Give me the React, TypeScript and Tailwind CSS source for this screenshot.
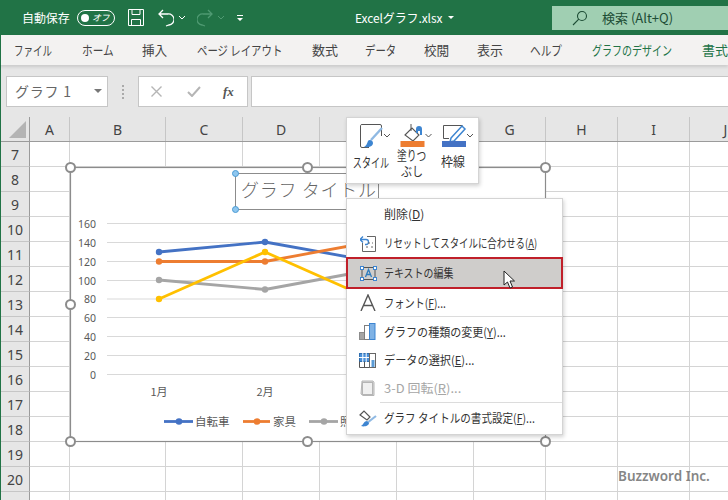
import React from "react";

const JP = "font-['Noto_Sans_CJK_JP','Noto_Sans',sans-serif]";
const COLS = [
  { l: "A", w: "w-[40px]" },
  { l: "B", w: "w-[96px]" },
  { l: "C", w: "w-[77px]" },
  { l: "D", w: "w-[77px]" },
  { l: "E", w: "w-[77px]" },
  { l: "F", w: "w-[77px]" },
  { l: "G", w: "w-[72px]" },
  { l: "H", w: "w-[72px]" },
  { l: "I", w: "w-[72px]" },
  { l: "J", w: "w-[72px]" },
];
const ROWS = [7, 8, 9, 10, 11, 12, 13, 14, 15, 16, 17, 18, 19, 20, 21];

const TABS = [
  { t: "ファイル", box: "ml-[13px] w-[38px]", sx: "scale-x-[.73]", c: "" },
  { t: "ホーム", box: "ml-[30px] w-[32px]", sx: "scale-x-[.82]", c: "" },
  { t: "挿入", box: "ml-[28px] w-[25px]", sx: "scale-x-[.97]", c: "" },
  { t: "ページ レイアウト", box: "ml-[30px] w-[85px]", sx: "scale-x-[.8]", c: "" },
  { t: "数式", box: "ml-[30px] w-[26px]", sx: "scale-x-100", c: "" },
  { t: "データ", box: "ml-[27px] w-[31px]", sx: "scale-x-[.8]", c: "" },
  { t: "校閲", box: "ml-[28px] w-[25px]", sx: "scale-x-[.97]", c: "" },
  { t: "表示", box: "ml-[28px] w-[26px]", sx: "scale-x-100", c: "" },
  { t: "ヘルプ", box: "ml-[27px] w-[32px]", sx: "scale-x-[.82]", c: "" },
  { t: "グラフのデザイン", box: "ml-[30px] w-[80px]", sx: "scale-x-[.77]", c: "text-[#217346]" },
  { t: "書式", box: "ml-[30px] w-[26px]", sx: "scale-x-100", c: "text-[#217346]" },
];

function Handle({ x, y }: { x: number; y: number }) {
  return <circle cx={x} cy={y} r={4.5} fill="#fff" stroke="#8c8c8c" strokeWidth={2} />;
}

function Series({ pts, color }: { pts: number[][]; color: string }) {
  return (
    <g>
      <polyline points={pts.map((p) => p.join(",")).join(" ")} fill="none" stroke={color} strokeWidth={2.8} strokeLinejoin="round" />
      {pts.map((p, i) => (
        <circle key={i} cx={p[0]} cy={p[1]} r={3.2} fill={color} />
      ))}
    </g>
  );
}

function Chart() {
  const gy = [223.5, 242.5, 261.5, 280.5, 299, 317.5, 336.5, 355.5, 374.5];
  const labels = ["160", "140", "120", "100", "80", "60", "40", "20", "0"];
  return (
    <svg className="absolute left-0 top-0 pointer-events-none" width={728} height={500}>
      <rect x={70.5} y={167.5} width={475} height={274} fill="#fff" stroke="#8c8c8c" strokeWidth={1.2} />
      {gy.map((y) => (
        <line key={y} x1={107} x2={530} y1={y} y2={y} stroke="#d9d9d9" strokeWidth={1} />
      ))}
      {gy.map((y, i) => (
        <text key={i} x={96} y={y + 4} textAnchor="end" fontSize={10.5} fill="#595959" fontFamily="Noto Sans">
          {labels[i]}
        </text>
      ))}
      <text x={159} y={396} textAnchor="middle" fontSize={11} fill="#595959" fontFamily="Noto Sans CJK JP">1月</text>
      <text x={265} y={396} textAnchor="middle" fontSize={11} fill="#595959" fontFamily="Noto Sans CJK JP">2月</text>
      <Series color="#4472c4" pts={[[159, 252], [265, 242], [371, 261]]} />
      <Series color="#ed7d31" pts={[[159, 261.5], [265, 261.5], [371, 242]]} />
      <Series color="#a5a5a5" pts={[[159, 280], [265, 289.5], [371, 270]]} />
      <Series color="#ffc000" pts={[[159, 299], [265, 252], [371, 299]]} />
      <g fontFamily="Noto Sans CJK JP" fontSize={11.5} fill="#595959">
        <line x1={164} x2={193} y1={421.5} y2={421.5} stroke="#4472c4" strokeWidth={2.8} />
        <circle cx={179} cy={421.5} r={3.3} fill="#4472c4" />
        <text x={195} y={425.5}>自転車</text>
        <line x1={243} x2={270} y1={421.5} y2={421.5} stroke="#ed7d31" strokeWidth={2.8} />
        <circle cx={257} cy={421.5} r={3.3} fill="#ed7d31" />
        <text x={273} y={425.5}>家具</text>
        <line x1={309} x2={338} y1={421.5} y2={421.5} stroke="#a5a5a5" strokeWidth={2.8} />
        <circle cx={324} cy={421.5} r={3.3} fill="#a5a5a5" />
        <text x={340} y={425.5}>照明</text>
      </g>
      <rect x={235.5} y={173.5} width={143} height={36} fill="none" stroke="#8c8c8c" strokeWidth={1} />
      <text x={241} y={197} fontSize={18} fill="#666" letterSpacing={0.7} fontFamily="Noto Sans CJK JP" fontWeight={300}>グラフ タイトル</text>
      <circle cx={235.5} cy={173.5} r={3} fill="#8fc7ef" stroke="#4a9bd4" strokeWidth={1} />
      <circle cx={235.5} cy={209.5} r={3} fill="#8fc7ef" stroke="#4a9bd4" strokeWidth={1} />
      <Handle x={70.5} y={167.5} />
      <Handle x={307.5} y={167.5} />
      <Handle x={545.5} y={167.5} />
      <Handle x={70.5} y={304.5} />
      <Handle x={70.5} y={441.5} />
      <Handle x={307.5} y={441.5} />
      <Handle x={545.5} y={441.5} />
    </svg>
  );
}

function Caret({ x }: { x: number }) {
  return <path d={`M${x - 3} 12l3 3 3-3`} fill="none" stroke="#555" strokeWidth="1" />;
}

function MiniToolbar() {
  return (
    <div className={`absolute left-[346px] top-[117px] w-[133px] h-[67px] bg-white border border-[#d4d4d4] shadow-[1px_2px_4px_rgba(0,0,0,0.18)] flex text-[13px] text-[#333] ${JP}`}>
      <div className="w-[47px] flex flex-col items-center pt-[4px]">
        <svg className="shrink-0" width="44" height="28" viewBox="0 0 44 28">
          <path d="M20 25.500H13a1.500 1.500 0 0 1-1.500-1.500V3.500A1.500 1.500 0 0 1 13 2.500h18a1.500 1.500 0 0 1 1.500 1.500v10" fill="#fff" stroke="#555" />
          <path d="M33 6L22 18" stroke="#8fb9e3" strokeWidth="2.400" />
          <path d="M15 25c3 1 9 0 9-4 0-3-4-4-5-2-1 3-2 5-4 6z" fill="#3d85d1" />
          <Caret x={38} />
        </svg>
        <span className="mt-[4px] leading-[15px] whitespace-nowrap inline-block scale-x-[.7]">スタイル</span>
      </div>
      <div className="w-[35px] flex flex-col items-center pt-[4px]">
        <svg className="shrink-0" width="44" height="28" viewBox="0 0 44 28">
          <path d="M15 13L22 6l7 7-6 6z" fill="#fff" stroke="#555" strokeWidth="1.100" />
          <path d="M21 2v7" stroke="#555" />
          <path d="M26 7a3 3 0 0 1 6 0v6h-2V9h-2v2h-2z" fill="#3d85d1" />
          <rect x="10.500" y="19" width="24" height="6" fill="#ed7d31" />
          <Caret x={38.5} />
        </svg>
        <div className="mt-[-3px] leading-[16px] text-center flex flex-col items-center">
          <span className="whitespace-nowrap inline-block scale-x-[.75]">塗りつ</span>
          <span className="whitespace-nowrap inline-block scale-x-[.85]">ぶし</span>
        </div>
      </div>
      <div className="w-[50px] flex flex-col items-center pt-[4px]">
        <svg className="shrink-0" width="44" height="28" viewBox="0 0 44 28">
          <path d="M17 16.500H11.500V3.500H30.500" fill="none" stroke="#555" />
          <path d="M19 16L30 4l3 3-11 12-4 1z" fill="#fff" stroke="#3d85d1" strokeWidth="1.500" />
          <rect x="10" y="19" width="24" height="6" fill="#4472c4" />
          <Caret x={38} />
        </svg>
        <span className="mt-[3px] leading-[15px] whitespace-nowrap inline-block scale-x-[.92]">枠線</span>
      </div>
    </div>
  );
}

function ItemIcon({ name }: { name: string }) {
  if (name === "reset")
    return (
      <svg width="16" height="17" viewBox="0 0 16 17">
        <path d="M7 1.500h8.500v15h-13V8" fill="#fff" stroke="#666" />
        <path d="M0 4.500h6a2.500 2.500 0 0 1 0 5H5M3 1.500L0 4.500l3 3" fill="none" stroke="#3d85d1" strokeWidth="1.300" />
        <path d="M8 8h2M12 8h1M6 12h2M11 12h2" stroke="#666" />
      </svg>
    );
  if (name === "text")
    return (
      <svg width="17" height="15" viewBox="0 0 17 15">
        <rect x="2" y="1.500" width="13" height="12" fill="none" stroke="#555" />
        <rect x="0.500" y="0.500" width="3" height="3" fill="#fff" stroke="#3d85d1" />
        <rect x="13.500" y="0.500" width="3" height="3" fill="#fff" stroke="#3d85d1" />
        <rect x="0.500" y="11.500" width="3" height="3" fill="#fff" stroke="#3d85d1" />
        <rect x="13.500" y="11.500" width="3" height="3" fill="#fff" stroke="#3d85d1" />
        <path d="M5.500 11l3-7.500 3 7.500M6.500 8.500h4" fill="none" stroke="#2f7dbf" strokeWidth="1.300" />
      </svg>
    );
  if (name === "font")
    return (
      <svg width="16" height="17" viewBox="0 0 16 17">
        <path d="M1 17L8 1l7 16M3.500 11.500h9" fill="none" stroke="#555" strokeWidth="1.400" />
      </svg>
    );
  if (name === "type")
    return (
      <svg width="17" height="17" viewBox="0 0 17 17">
        <rect x="0.500" y="9.500" width="5" height="7" fill="#a6a6a6" stroke="#8c8c8c" />
        <rect x="5.500" y="2.500" width="5" height="14" fill="#fff" stroke="#7f7f7f" />
        <rect x="10.500" y="0.500" width="5.500" height="16" fill="#7fb2e5" stroke="#3d85d1" />
      </svg>
    );
  if (name === "data")
    return (
      <svg width="17" height="15" viewBox="0 0 17 15">
        <rect x="0.500" y="0.500" width="10" height="8" fill="#4a90d9" stroke="#2f6fb0" />
        <path d="M3.800 0v9M7.200 0v9M0 4.500h11" stroke="#fff" />
        <path d="M0.500 8.500v6h10v-6M5.500 9v5" fill="none" stroke="#555" />
        <rect x="10.500" y="0.500" width="6" height="14" fill="#fff" stroke="#666" />
        <rect x="12.500" y="7" width="3" height="7" fill="#5b9bd5" />
      </svg>
    );
  if (name === "3d")
    return (
      <svg width="15" height="16" viewBox="0 0 15 16">
        <path d="M2 1h11l1 1.500v13H3l-2-1.500z" fill="#d9d9d9" stroke="#b5b5b5" />
        <rect x="2.500" y="2.500" width="10" height="12" fill="#f0f0f0" stroke="#b5b5b5" />
      </svg>
    );
  if (name === "format")
    return (
      <svg width="18" height="17" viewBox="0 0 18 17">
        <path d="M1 5l4-4 6 6-3 3z" fill="#fff" stroke="#555" strokeWidth="1.200" />
        <path d="M17 6L8 13" stroke="#8fb9e3" strokeWidth="2.200" />
        <path d="M8 11c-3 0-3 3-6 5 3 1 8 0 8-3z" fill="#3d85d1" />
      </svg>
    );
  return null;
}

function Item({ icon, text, u, after, h, sx, disabled }: { icon?: string; text: string; u: string; after: string; h: string; sx: string; disabled?: boolean }) {
  return (
    <div className={`flex items-center ${h} ${disabled ? "text-[#a6a6a6]" : "text-[#333]"}`}>
      <div className="w-[37px] shrink-0 h-full flex items-center justify-center pl-[4px]">{icon && <ItemIcon name={icon} />}</div>
      <span className={`whitespace-nowrap inline-block origin-left ${sx}`}>
        {text}(<u>{u}</u>){after}
      </span>
    </div>
  );
}

function ContextMenu() {
  return (
    <div className={`absolute left-[346px] top-[198px] w-[217px] h-[237px] bg-white border border-[#d4d4d4] shadow-[1px_2px_4px_rgba(0,0,0,0.18)] flex flex-col text-[12px] ${JP}`}>
      <Item h="h-[30px]" sx="scale-x-100" text="削除" u="D" after="" />
      <Item h="h-[28px]" sx="scale-x-[.785]" icon="reset" text="リセットしてスタイルに合わせる" u="A" after="" />
      <div className="flex items-center h-[32px] shrink-0 mx-[-1px] bg-[#cfcdcb] border-2 border-[#c0202a] text-[#333]">
        <div className="w-[36px] shrink-0 flex justify-center pl-[4px]"><ItemIcon name="text" /></div>
        <span className="whitespace-nowrap inline-block origin-left scale-x-[.83]">テキストの編集</span>
      </div>
      <Item h="h-[27px]" sx="scale-x-[.85]" icon="font" text="フォント" u="F" after="..." />
      <div className="h-px bg-[#dcdcdc] ml-[33px] shrink-0" />
      <Item h="h-[29px]" sx="scale-x-[.92]" icon="type" text="グラフの種類の変更" u="Y" after="..." />
      <Item h="h-[28px]" sx="scale-x-[.93]" icon="data" text="データの選択" u="E" after="..." />
      <Item h="h-[28px]" sx="scale-x-[1.08]" icon="3d" text="3-D 回転" u="R" after="..." disabled />
      <div className="h-px bg-[#dcdcdc] ml-[33px] shrink-0" />
      <Item h="h-[30px]" sx="scale-x-[.88]" icon="format" text="グラフ タイトルの書式設定" u="F" after="..." />
    </div>
  );
}

export default function App() {
  return (
    <div className={`relative w-[728px] h-[500px] overflow-hidden bg-white flex flex-col ${JP}`}>
      {/* title bar */}
      <div className="h-[35px] bg-[#217346] flex items-center text-white text-[12px] shrink-0 relative">
        <span className="ml-[22px] w-[50px] tracking-[-0.1px] whitespace-nowrap">自動保存</span>
        <div className="ml-[5px] w-[38px] h-[16px] rounded-full border border-white flex items-center px-[3px] justify-between">
          <span className="w-[8px] h-[8px] rounded-full bg-white" />
          <span className="text-[9px] mr-[2px] tracking-[-0.5px] italic">オフ</span>
        </div>
        <svg className="ml-[13px]" width="16" height="17" viewBox="0 0 16 17" fill="none" stroke="#fff">
          <path d="M0.500 0.500h15v16h-15zM4 0.500v5h8v-5M3.500 16.500v-6h9v6" />
        </svg>
        <svg className="ml-[14px]" width="16" height="18" viewBox="0 0 16 18" fill="none" stroke="#fff" strokeWidth="1.300">
          <path d="M5 1L1 5l4 4M1 5h9a5.500 5.500 0 0 1 1 11L8 17" />
        </svg>
        <svg className="ml-[4px]" width="8" height="6" viewBox="0 0 8 6" fill="none" stroke="#fff"><path d="M1 1l3 3 3-3" /></svg>
        <svg className="ml-[11px]" width="16" height="18" viewBox="0 0 16 18" fill="none" stroke="#4f9a72" strokeWidth="1.300">
          <path d="M11 1l4 4-4 4M15 5H6a5.500 5.500 0 0 0-1 11l3 1" />
        </svg>
        <svg className="ml-[4px]" width="8" height="6" viewBox="0 0 8 6" fill="none" stroke="#4f9a72"><path d="M1 1l3 3 3-3" /></svg>
        <svg className="ml-[11px]" width="8" height="8" viewBox="0 0 8 8" fill="#fff"><path d="M1 1h6v1H1zM1 4h6L4 7z" /></svg>
        <span className="ml-[111px] text-[12px] tracking-[-0.1px] whitespace-nowrap">Excelグラフ.xlsx</span>
        <svg className="ml-[6px]" width="6" height="4" viewBox="0 0 6 4" fill="#fff"><path d="M0 0h6L3 3z" /></svg>
        <div className="absolute left-[552px] right-0 top-[6px] h-[24px] bg-[#a0cfb2] flex items-center text-[#1d4d35]">
          <svg className="ml-[20px]" width="16" height="16" viewBox="0 0 16 16" fill="none" stroke="#1d4d35" strokeWidth="1.100">
            <circle cx="10" cy="6" r="4.500" /><path d="M6.800 9.200L1 15" />
          </svg>
          <span className="ml-[14px] text-[13px] whitespace-nowrap">検索 (Alt+Q)</span>
        </div>
      </div>
      {/* tabs */}
      <div className="h-[30px] bg-[#f3f2f1] flex items-center text-[13px] text-[#444] shrink-0 border-l border-[#217346] relative z-10 shadow-[0_2px_3px_rgba(0,0,0,0.12)]">
        {TABS.map((tab) => (
          <span key={tab.t} className={`${tab.box} shrink-0 ${tab.c}`}>
            <span className={`inline-block whitespace-nowrap origin-left ${tab.sx}`}>{tab.t}</span>
          </span>
        ))}
      </div>
      {/* formula bar */}
      <div className="h-[52px] bg-[#e6e6e6] flex items-start pt-[11px] pl-[5px] shrink-0 border-l border-[#217346]">
        <div className="w-[102px] h-[31px] bg-white border border-[#c6c6c6] flex items-center justify-between pl-[8px] pr-[5px] text-[14px] text-[#666] tracking-[0.8px]">
          <span className="whitespace-nowrap">グラフ 1</span>
          <svg width="8" height="5" viewBox="0 0 8 5" fill="#777"><path d="M0 0h8L4 4z" /></svg>
        </div>
        <div className="w-[30px] h-[31px] flex flex-col items-center justify-center gap-[2px]">
          <span className="w-[2px] h-[2px] bg-[#aaa]" /><span className="w-[2px] h-[2px] bg-[#aaa]" /><span className="w-[2px] h-[2px] bg-[#aaa]" /><span className="w-[2px] h-[2px] bg-[#aaa]" />
        </div>
        <div className="w-[110px] h-[31px] bg-white border border-[#c6c6c6] flex items-center pl-[12px] text-[#777]">
          <svg width="11" height="11" viewBox="0 0 11 11" stroke="#b5b5b5" strokeWidth="1.400"><path d="M0.500 0.500l10 10M10.500 0.500l-10 10" /></svg>
          <svg className="ml-[25px]" width="14" height="11" viewBox="0 0 14 11" fill="none" stroke="#b5b5b5" strokeWidth="2"><path d="M1 6l4 4 8-9" /></svg>
          <span className="ml-[22px] text-[13px] font-['Liberation_Serif'] italic font-bold text-[#555]">fx</span>
        </div>
        <div className="ml-[3px] flex-1 h-[31px] bg-white border border-[#c6c6c6] border-r-0" />
      </div>
      {/* sheet */}
      <div className="flex-1 relative border-l border-[#217346]">
        <div className="flex h-[25px] bg-[#e6e6e6] border-b border-[#9b9b9b] text-[14px] text-[#444] font-['Noto_Sans']">
          <div className="w-[29px] shrink-0 border-r border-[#9b9b9b] flex items-end justify-end pr-[3px] pb-[3px]">
            <svg width="17" height="17" viewBox="0 0 17 17"><path d="M17 0v17H0z" fill="#b4b4b4" /></svg>
          </div>
          {COLS.map((c) => (
            <div key={c.l} className={`${c.w} shrink-0 flex items-center justify-center border-r border-[#c6c6c6]`}>{c.l}</div>
          ))}
        </div>
        {ROWS.map((r) => (
          <div key={r} className="flex h-[25px]">
            <div className="w-[29px] shrink-0 bg-[#e6e6e6] border-r border-b border-r-[#9b9b9b] border-b-[#c6c6c6] flex items-center justify-center text-[14px] text-[#444] font-['Noto_Sans']">{r}</div>
            {COLS.map((c) => (
              <div key={c.l} className={`${c.w} shrink-0 border-r border-b border-[#d4d4d4]`} />
            ))}
          </div>
        ))}
      </div>
      <Chart />
      <MiniToolbar />
      <ContextMenu />
      {/* mouse pointer */}
      <svg className="absolute left-[503px] top-[270px]" width="13" height="19" viewBox="0 0 13 19">
        <path d="M1 1v14l3.500-3 2.500 6 2.500-1-2.500-6h4.500z" fill="#fff" stroke="#222" strokeWidth="1" />
      </svg>
      <span className="absolute left-[618px] top-[466px] text-[13.5px] font-semibold text-[#7f7f7f] font-['Noto_Sans'] opacity-95">Buzzword Inc.</span>
    </div>
  );
}
